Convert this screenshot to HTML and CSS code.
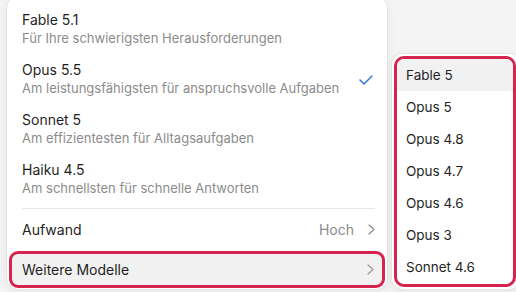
FILE: index.html
```html
<!DOCTYPE html>
<html lang="de">
<head>
<meta charset="utf-8">
<link rel="stylesheet" href="styles.css">
</head>
<body>
<div class="stage">
  <div class="menu">
    <div class="model">
      <div class="text">
        <div class="title">Fable 5.1</div>
        <div class="sub">Für Ihre schwierigsten Herausforderungen</div>
      </div>
    </div>
    <div class="model">
      <div class="text">
        <div class="title">Opus 5.5</div>
        <div class="sub">Am leistungsfähigsten für anspruchsvolle Aufgaben</div>
      </div>
      <svg class="check" width="14" height="10" viewBox="0 0 14 10"><polyline points="1,5 5,9 13,1" fill="none" stroke="#3a7bd5" stroke-width="1.6" stroke-linecap="round" stroke-linejoin="round"/></svg>
    </div>
    <div class="model">
      <div class="text">
        <div class="title">Sonnet 5</div>
        <div class="sub">Am effizientesten für Alltagsaufgaben</div>
      </div>
    </div>
    <div class="model">
      <div class="text">
        <div class="title">Haiku 4.5</div>
        <div class="sub">Am schnellsten für schnelle Antworten</div>
      </div>
    </div>
    <div class="divider"></div>
    <div class="row">
      <span class="label">Aufwand</span>
      <span class="value">Hoch</span>
      <svg class="chev" width="7" height="11" viewBox="0 0 7 11"><polyline points="1,1 6,5.5 1,10" fill="none" stroke="#8a8a8a" stroke-width="1.2" stroke-linecap="round" stroke-linejoin="round"/></svg>
    </div>
    <div class="row more">
      <span class="label">Weitere Modelle</span>
      <svg class="chev" width="7" height="11" viewBox="0 0 7 11"><polyline points="1,1 6,5.5 1,10" fill="none" stroke="#9a9a9a" stroke-width="1.2" stroke-linecap="round" stroke-linejoin="round"/></svg>
    </div>
  </div>
  <div class="submenu">
    <div class="marked">
      <div class="opt active">Fable 5</div>
      <div class="opt">Opus 5</div>
      <div class="opt">Opus 4.8</div>
      <div class="opt">Opus 4.7</div>
      <div class="opt">Opus 4.6</div>
      <div class="opt">Opus 3</div>
      <div class="opt">Sonnet 4.6</div>
    </div>
  </div>
</div>
</body>
</html>
```
FILE: styles.css
```css
html, body {
  margin: 0;
  padding: 0;
}
body {
  background: #f4f4f4;
  font-family: Inter, "Noto Sans", sans-serif;
  width: 516px;
  height: 292px;
  overflow: hidden;
}
.stage {
  display: flex;
  align-items: flex-start;
  gap: 3px;
  padding-left: 6px;
}
.menu {
  flex: none;
  width: 382px;
  box-sizing: border-box;
  margin-top: -4px;
  height: 294px;
  background: #fff;
  border: 1px solid #e4e4e4;
  border-radius: 12px;
  box-shadow: 0 2px 8px rgba(0,0,0,0.06);
  padding: 7px 2px 0 2px;
  display: flex;
  flex-direction: column;
}
.model {
  display: flex;
  align-items: center;
  padding: 6px 13px;
  height: 50px;
  box-sizing: border-box;
}
.text {
  flex: 1;
}
.title {
  font-size: 14px;
  line-height: 19px;
  color: #1f1f1f;
}
.sub {
  font-size: 13px;
  line-height: 19px;
  color: #8c8c8c;
}
.check {
  margin-right: -1px;
  margin-top: 2px;
}
.divider {
  height: 1px;
  background: #e6e6e6;
  margin: 4px 10px 0 13px;
}
.row {
  display: flex;
  align-items: center;
  height: 40px;
  padding: 0 10px 0 13px;
  box-sizing: border-box;
  font-size: 14px;
  color: #1f1f1f;
}
.label {
  flex: 1;
}
.value {
  color: #8c8c8c;
  margin-right: 14px;
}
.row.more {
  height: 37px;
  margin-top: 2px;
  background: #f1f1f1;
  border: 3px solid #d4244f;
  border-radius: 9px;
  padding: 0 8px 0 10px;
}
.submenu {
  flex: none;
  margin-top: 53px;
  width: 130px;
  height: 237px;
  box-sizing: border-box;
  background: #fff;
  border: 1px solid #e4e4e4;
  border-radius: 12px;
  box-shadow: 0 2px 8px rgba(0,0,0,0.06);
  padding: 2px;
}
.marked {
  width: 122px;
  box-sizing: border-box;
  height: 231px;
  border: 3px solid #d4244f;
  border-radius: 10px;
  overflow: hidden;
}
.opt {
  height: 32px;
  display: flex;
  align-items: center;
  padding-left: 9px;
  font-size: 13.5px;
  color: #1f1f1f;
}
.opt.active {
  background: #f1f1f1;
}
```
